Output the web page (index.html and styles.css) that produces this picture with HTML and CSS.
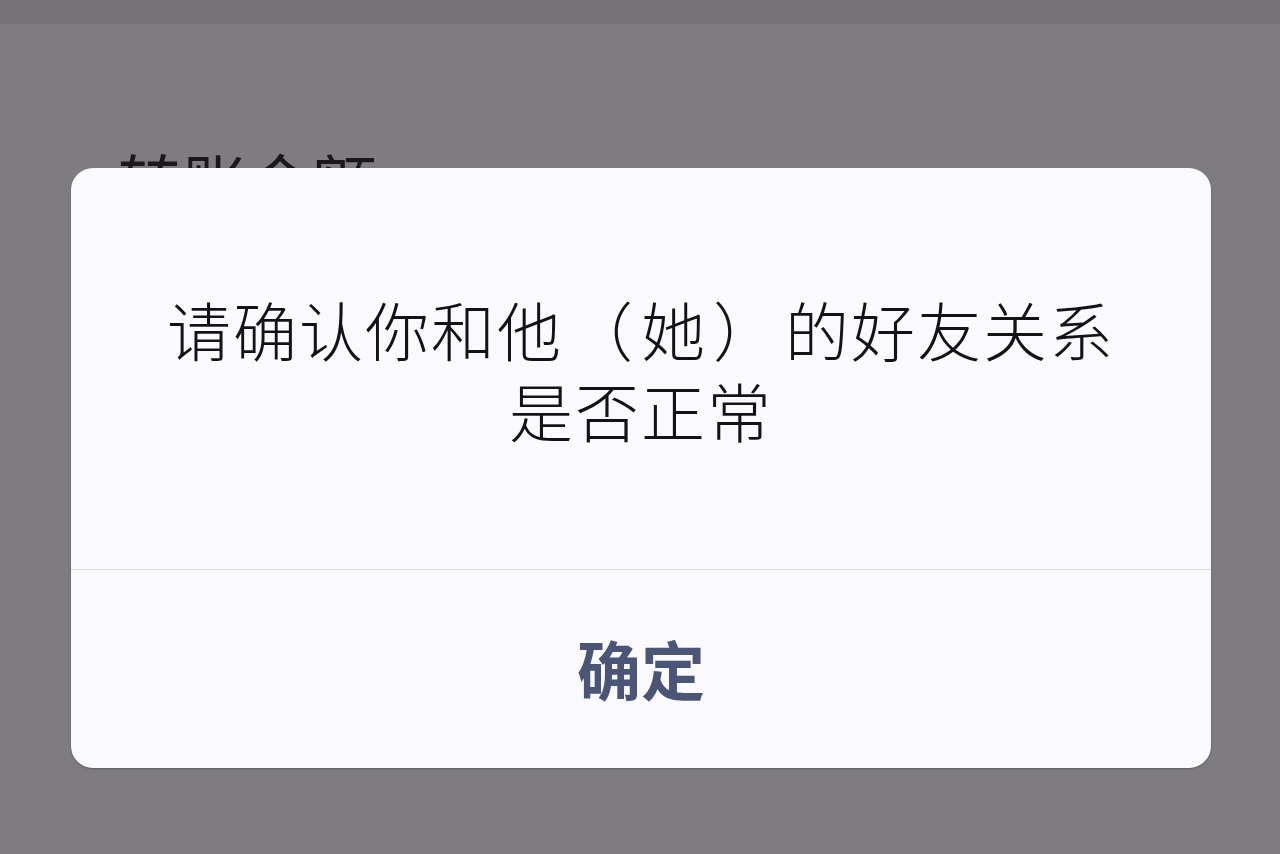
FILE: index.html
```html
<!DOCTYPE html>
<html lang="zh-CN">
<head>
    <meta charset="UTF-8">
    <meta name="viewport" content="width=device-width, initial-scale=1.0">
    <title>确认好友关系</title>
    <link rel="stylesheet" href="styles.css">
</head>
<body>
    <div class="screen">
        <!-- page underneath the dimmed overlay -->
        <div class="topbar"></div>
        <div class="page">
            <div class="label">转账金额</div>
        </div>

        <!-- alert dialog -->
        <div class="alert">
            <div class="alert-body">
                <p class="message">
                    <span class="line">请确认你和他<span class="paren">（</span>她<span class="paren">）</span>的好友关系</span>
                    <span class="line">是否正常</span>
                </p>
            </div>
            <button class="alert-btn">确定</button>
        </div>
    </div>
</body>
</html>
```

FILE: styles.css
```css
/* dimmed transfer page with an alert on top */
body {
    margin: 0;
    background-color: #7e7c81;
    font-family: "Noto Sans CJK SC", "Noto Sans", sans-serif;
}

.screen {
    position: relative;
    width: 1280px;
    height: 854px;
    overflow: hidden;
    background-color: #7e7c81;
}

.topbar {
    height: 24px;
    background-color: #747277;
}

.page {
    padding: 124px 0 0 118px;
}

.label {
    font-size: 64px;
    line-height: 1;
    letter-spacing: 1px;
    color: #1a181c;
}

.alert {
    position: absolute;
    left: 71px;
    top: 168px;
    width: 1140px;
    height: 600px;
    background-color: #fafafc;
    border-radius: 22px;
    display: flex;
    flex-direction: column;
    overflow: hidden;
    box-shadow: 0 1px 2px rgba(0, 0, 0, 0.25);
}

.alert-body {
    height: 401px;
    display: flex;
    align-items: center;
    justify-content: center;
    border-bottom: 1px solid #d9d9de;
}

.message {
    margin: 0;
    display: flex;
    flex-direction: column;
    align-items: center;
    font-size: 64px;
    font-weight: 300;
    letter-spacing: 2px;
    color: #141216;
}

.line {
    display: block;
    height: 81px;
    line-height: 81px;
}

/* full-width brackets sit centred with air on both sides */
.paren {
    display: inline-block;
    line-height: 64px;
    margin: 0 6px;
}

.alert-btn {
    flex: 1;
    border: none;
    background: none;
    padding: 0 0 4px 0;
    font-family: "Noto Sans CJK SC", "Noto Sans", sans-serif;
    font-size: 64px;
    font-weight: bold;
    color: #4b5677;
    cursor: pointer;
}
```
